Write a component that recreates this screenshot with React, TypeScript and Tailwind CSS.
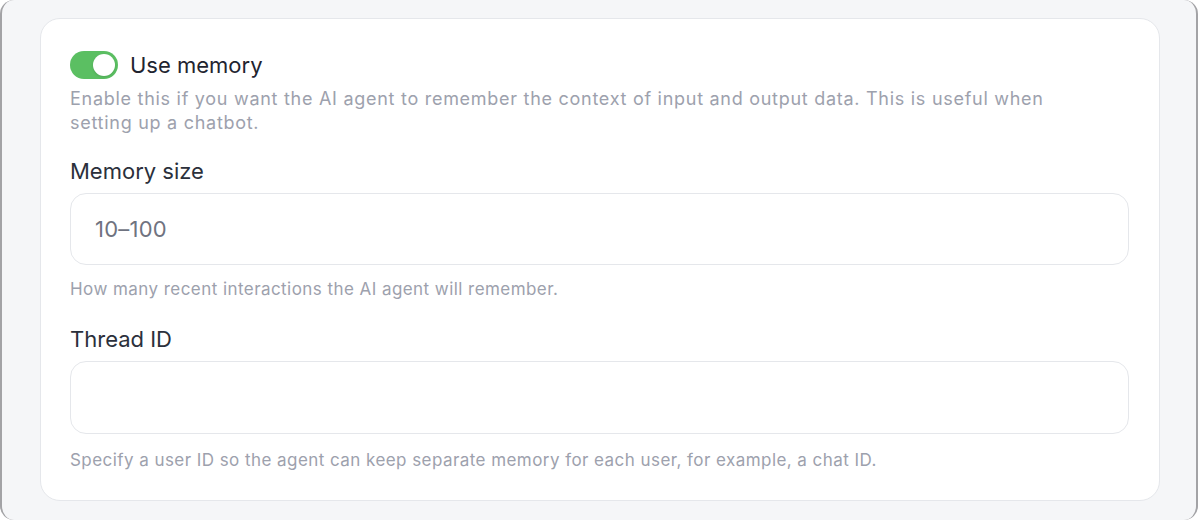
import { useState } from 'react';

function Toggle({ on, onChange }: { on: boolean; onChange: (v: boolean) => void }) {
  return (
    <button
      type="button"
      onClick={() => onChange(!on)}
      className={`relative w-12 h-7 rounded-full shrink-0 transition-colors ${
        on ? 'bg-[#5bbf62]' : 'bg-gray-300'
      }`}
    >
      <span
        className={`absolute top-[3px] w-[22px] h-[22px] rounded-full bg-white shadow-sm transition-all ${
          on ? 'left-[23px]' : 'left-[3px]'
        }`}
      />
    </button>
  );
}

export default function App() {
  const [useMemory, setUseMemory] = useState(true);
  const [memorySize, setMemorySize] = useState('');
  const [threadId, setThreadId] = useState('');

  return (
    <div className="w-[1200px] h-[520px] bg-white" style={{ fontFamily: 'Inter, "Noto Sans", sans-serif' }}>
      <div className="h-full mr-[2px] rounded-[14px] bg-[#f5f6f8] border-x-2 border-x-[#a3a3a6] pl-[38px] pr-[36px] pt-[18px]">
        <div className="bg-white border border-[#e5e7eb] rounded-[20px] pl-[29px] pr-[30px] pt-[32px] pb-[28px]">
          <div className="flex items-center gap-3">
            <Toggle on={useMemory} onChange={setUseMemory} />
            <span className="text-[22px] leading-7 text-[#1f2430]">Use memory</span>
          </div>
          <p className="mt-2 text-[18px] leading-6 tracking-[0.04em] text-[#9da1ad] max-w-[1000px]">
            Enable this if you want the AI agent to remember the context of input and output data. This is useful when
            setting up a chatbot.
          </p>

          <label className="block mt-[22px] text-[22px] leading-7 text-[#2b303b]">Memory size</label>
          <input
            value={memorySize}
            onChange={(e) => setMemorySize(e.target.value)}
            placeholder="10–100"
            className="mt-2 w-full h-[72px] px-6 rounded-[16px] border border-[#e5e7eb] text-[22px] tracking-[0.01em] text-[#1f2430] placeholder:text-[#6f7380] outline-none"
          />
          <p className="mt-3 text-[17px] leading-6 tracking-[0.026em] text-[#9da1ad]">
            How many recent interactions the AI agent will remember.
          </p>

          <label className="block mt-[24px] text-[22px] leading-7 text-[#2b303b]">Thread ID</label>
          <input
            value={threadId}
            onChange={(e) => setThreadId(e.target.value)}
            className="mt-2 w-full h-[73px] px-6 rounded-[16px] border border-[#e5e7eb] text-[22px] text-[#1f2430] outline-none"
          />
          <p className="mt-[14px] text-[17px] leading-6 tracking-[0.026em] text-[#9da1ad]">
            Specify a user ID so the agent can keep separate memory for each user, for example, a chat ID.
          </p>
        </div>
      </div>
    </div>
  );
}
